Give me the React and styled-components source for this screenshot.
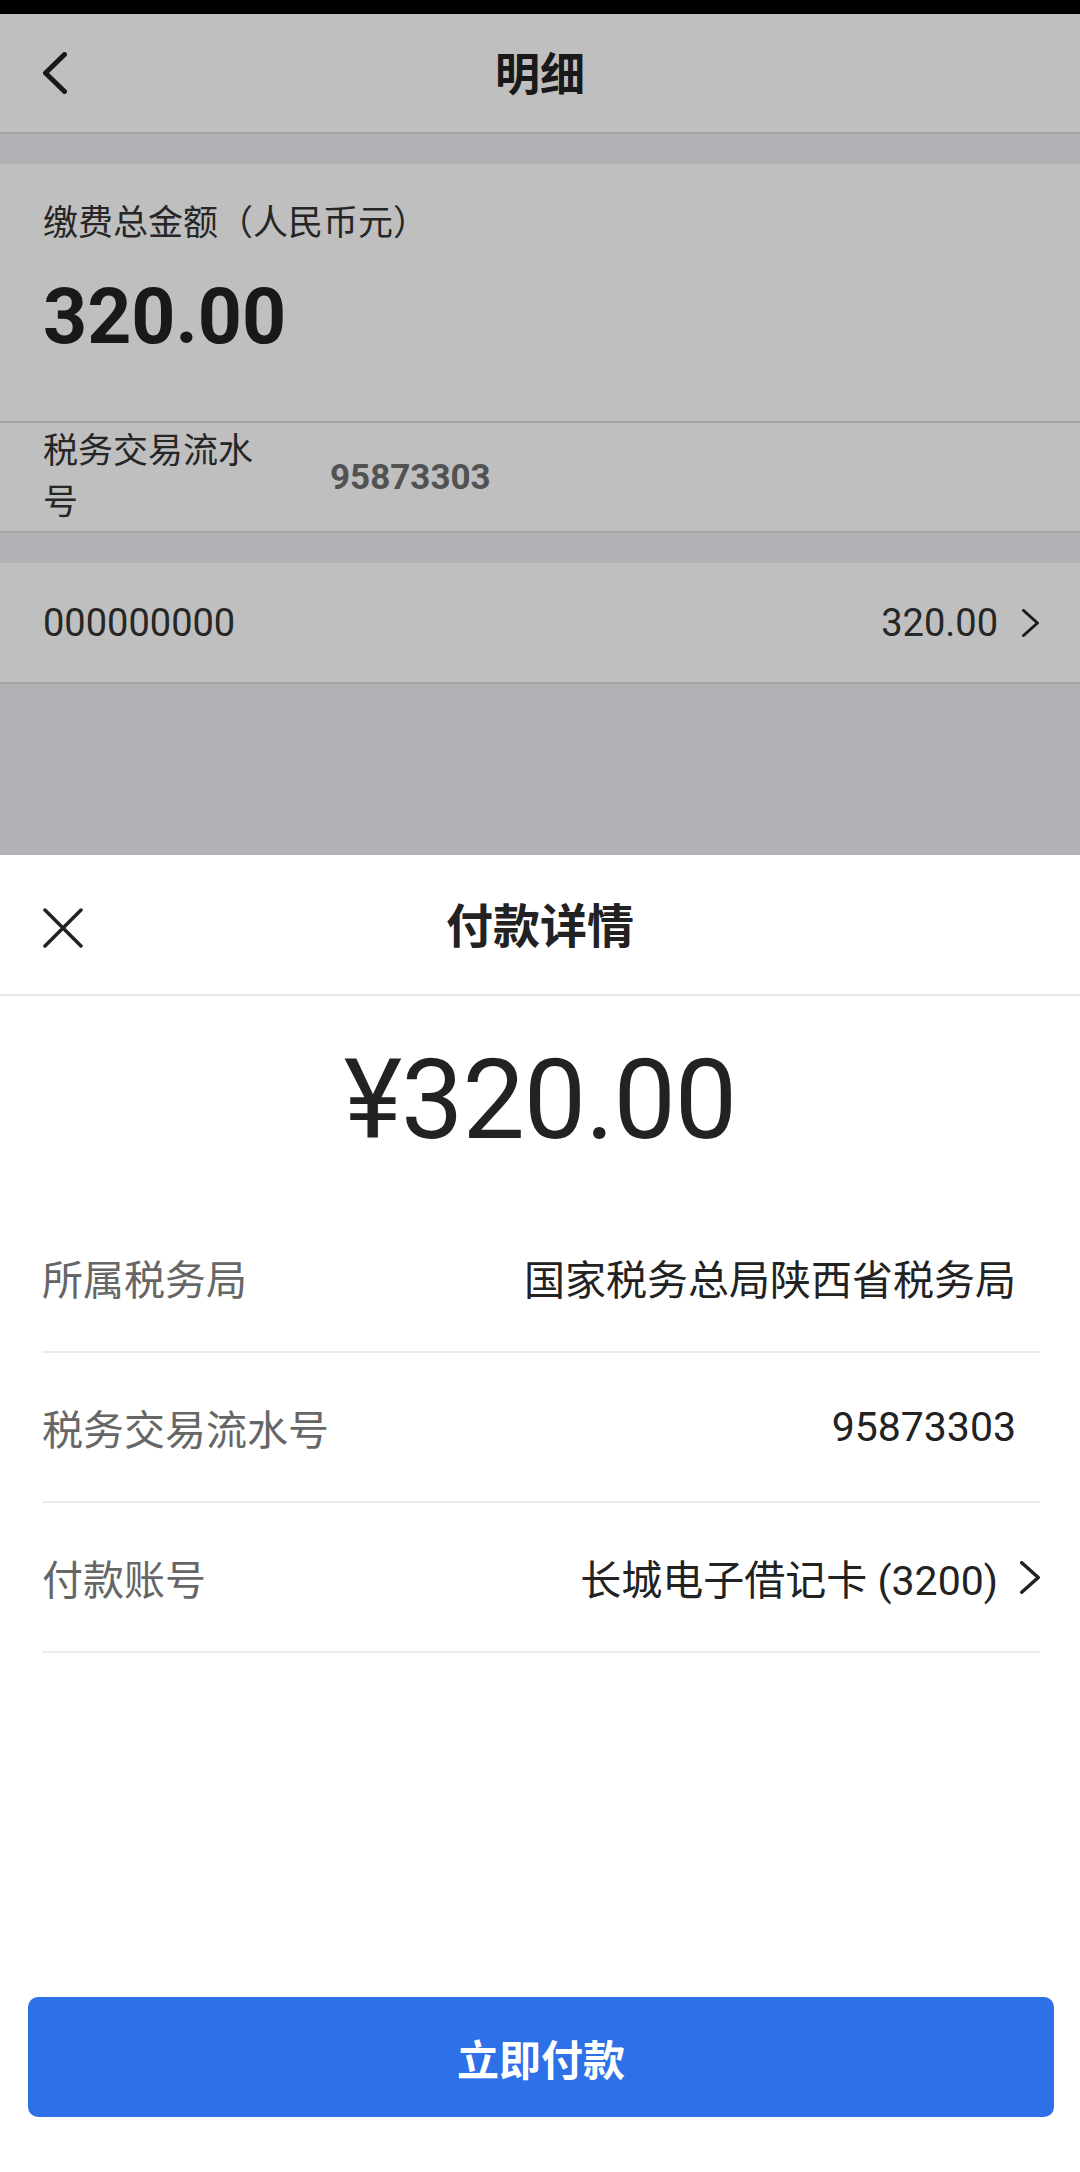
import React from "react";
import styled, { createGlobalStyle } from "styled-components";

const GlobalStyle = createGlobalStyle`
  html, body {
    margin: 0;
    padding: 0;
    background: #ffffff;
  }
  body {
    font-family: Roboto, "Noto Sans CJK SC", sans-serif;
    color: #222;
  }
  * {
    box-sizing: border-box;
  }
`;

const Screen = styled.div`
  position: relative;
  width: 1080px;
  height: 2172px;
  overflow: hidden;
  background: #ededf3;
  display: flex;
  flex-direction: column;
`;

const StatusBar = styled.div`
  height: 14px;
  background: #000;
  flex-shrink: 0;
`;

const NavBar = styled.header`
  position: relative;
  height: 120px;
  background: #fff;
  border-bottom: 2px solid #dddddd;
  display: flex;
  align-items: center;
  justify-content: center;
  flex-shrink: 0;
`;

const NavBack = styled.button`
  position: absolute;
  left: 43px;
  top: 50%;
  transform: translateY(-50%);
  border: 0;
  background: none;
  padding: 0;
  display: flex;
`;

const NavTitle = styled.h1`
  margin: 0 0 4px;
  font-size: 45px;
  font-weight: 700;
  color: #222;
`;

const Gap = styled.div`
  height: 30px;
  flex-shrink: 0;
`;

const SumCard = styled.section`
  height: 259px;
  background: #fff;
  border-bottom: 2px solid #dddddd;
  padding: 40px 43px 0;
  display: flex;
  flex-direction: column;
  gap: 26px;
  flex-shrink: 0;
`;

const SumLabel = styled.div`
  font-size: 35px;
  line-height: 40px;
  color: #333;
`;

const SumValue = styled.div`
  font-size: 77px;
  line-height: 94px;
  font-weight: 700;
  color: #222;
`;

const InfoRow = styled.div`
  height: ${(p) => p.$height}px;
  background: #fff;
  border-bottom: 2px solid #dddddd;
  padding: 0 41px 0 43px;
  display: flex;
  align-items: center;
  flex-shrink: 0;
`;

const InfoLabel = styled.div`
  width: 216px;
  font-size: 35px;
  line-height: 51px;
  color: #333;
`;

const InfoValue = styled.div`
  margin-left: 71px;
  font-size: 35px;
  font-weight: 700;
  color: #6e6e6e;
`;

const ItemCode = styled.div`
  flex: 1;
  font-size: 38px;
  color: #333;
`;

const ItemAmount = styled.div`
  display: flex;
  align-items: center;
  gap: 24px;
  font-size: 38px;
  color: #333;
`;

const Mask = styled.div`
  position: absolute;
  inset: 0;
  background: rgba(0, 0, 0, 0.25);
`;

const Sheet = styled.div`
  position: absolute;
  left: 0;
  right: 0;
  bottom: 0;
  height: 1317px;
  background: #fff;
  display: flex;
  flex-direction: column;
`;

const SheetHeader = styled.div`
  position: relative;
  height: 141px;
  border-bottom: 2px solid #e6e6e6;
  display: flex;
  align-items: center;
  justify-content: center;
  flex-shrink: 0;
`;

const CloseButton = styled.button`
  position: absolute;
  left: 43px;
  top: 53px;
  border: 0;
  background: none;
  padding: 0;
  display: flex;
`;

const SheetTitle = styled.h2`
  margin: 0 0 4px;
  font-size: 47px;
  font-weight: 700;
  color: #222;
`;

const Amount = styled.div`
  height: 207px;
  display: flex;
  align-items: center;
  justify-content: center;
  font-size: 111px;
  font-weight: 400;
  color: #222;
  letter-spacing: -1px;
  flex-shrink: 0;
`;

const DetailList = styled.div`
  margin: 0 40px 0 42px;
  display: flex;
  flex-direction: column;
`;

const DetailRow = styled.div`
  height: 150px;
  border-bottom: 2px solid #ececec;
  display: flex;
  align-items: center;
  justify-content: space-between;
  padding-right: ${(p) => (p.$arrow ? 0 : 24)}px;
`;

const DetailLabel = styled.div`
  font-size: 41px;
  color: #666;
`;

const DetailValue = styled.div`
  display: flex;
  align-items: center;
  gap: 22px;
  font-size: 41px;
  color: #222;
`;

const Spacer = styled.div`
  flex: 1;
`;

const PayButton = styled.button`
  margin: 0 26px 55px 28px;
  height: 120px;
  border: 0;
  border-radius: 10px;
  background: #2d70e7;
  color: #fff;
  font-family: inherit;
  font-size: 42px;
  font-weight: 700;
  flex-shrink: 0;
`;

const Chevron = ({ w, h, stroke, dir = "right", color = "#222" }) => {
  const pts =
    dir === "left"
      ? `${w - stroke / 2},${stroke / 2} ${stroke / 2},${h / 2} ${w - stroke / 2},${h - stroke / 2}`
      : `${stroke / 2},${stroke / 2} ${w - stroke / 2},${h / 2} ${stroke / 2},${h - stroke / 2}`;
  return (
    <svg width={w} height={h} viewBox={`0 0 ${w} ${h}`}>
      <polyline
        points={pts}
        fill="none"
        stroke={color}
        strokeWidth={stroke}
        strokeLinecap="round"
        strokeLinejoin="round"
      />
    </svg>
  );
};

const CloseIcon = () => (
  <svg width="40" height="40" viewBox="0 0 40 40">
    <path
      d="M2 2 L38 38 M38 2 L2 38"
      stroke="#222"
      strokeWidth="3.5"
      strokeLinecap="round"
    />
  </svg>
);

const details = [
  { label: "所属税务局", value: "国家税务总局陕西省税务局" },
  { label: "税务交易流水号", value: "95873303" },
  { label: "付款账号", value: "长城电子借记卡 (3200)", arrow: true },
];

export default function App() {
  return (
    <>
      <GlobalStyle />
      <Screen>
        <StatusBar />
        <NavBar>
          <NavBack>
            <Chevron w={24} h={42} stroke={5} dir="left" />
          </NavBack>
          <NavTitle>明细</NavTitle>
        </NavBar>
        <Gap />
        <SumCard>
          <SumLabel>缴费总金额（人民币元）</SumLabel>
          <SumValue>320.00</SumValue>
        </SumCard>
        <InfoRow $height={110}>
          <InfoLabel>税务交易流水号</InfoLabel>
          <InfoValue>95873303</InfoValue>
        </InfoRow>
        <Gap />
        <InfoRow $height={121}>
          <ItemCode>000000000</ItemCode>
          <ItemAmount>
            320.00
            <Chevron w={17} h={28} stroke={3} />
          </ItemAmount>
        </InfoRow>

        <Mask />

        <Sheet>
          <SheetHeader>
            <CloseButton>
              <CloseIcon />
            </CloseButton>
            <SheetTitle>付款详情</SheetTitle>
          </SheetHeader>
          <Amount>¥320.00</Amount>
          <DetailList>
            {details.map((d) => (
              <DetailRow key={d.label} $arrow={d.arrow}>
                <DetailLabel>{d.label}</DetailLabel>
                <DetailValue>
                  {d.value}
                  {d.arrow && <Chevron w={20} h={33} stroke={3.5} />}
                </DetailValue>
              </DetailRow>
            ))}
          </DetailList>
          <Spacer />
          <PayButton>立即付款</PayButton>
        </Sheet>
      </Screen>
    </>
  );
}
